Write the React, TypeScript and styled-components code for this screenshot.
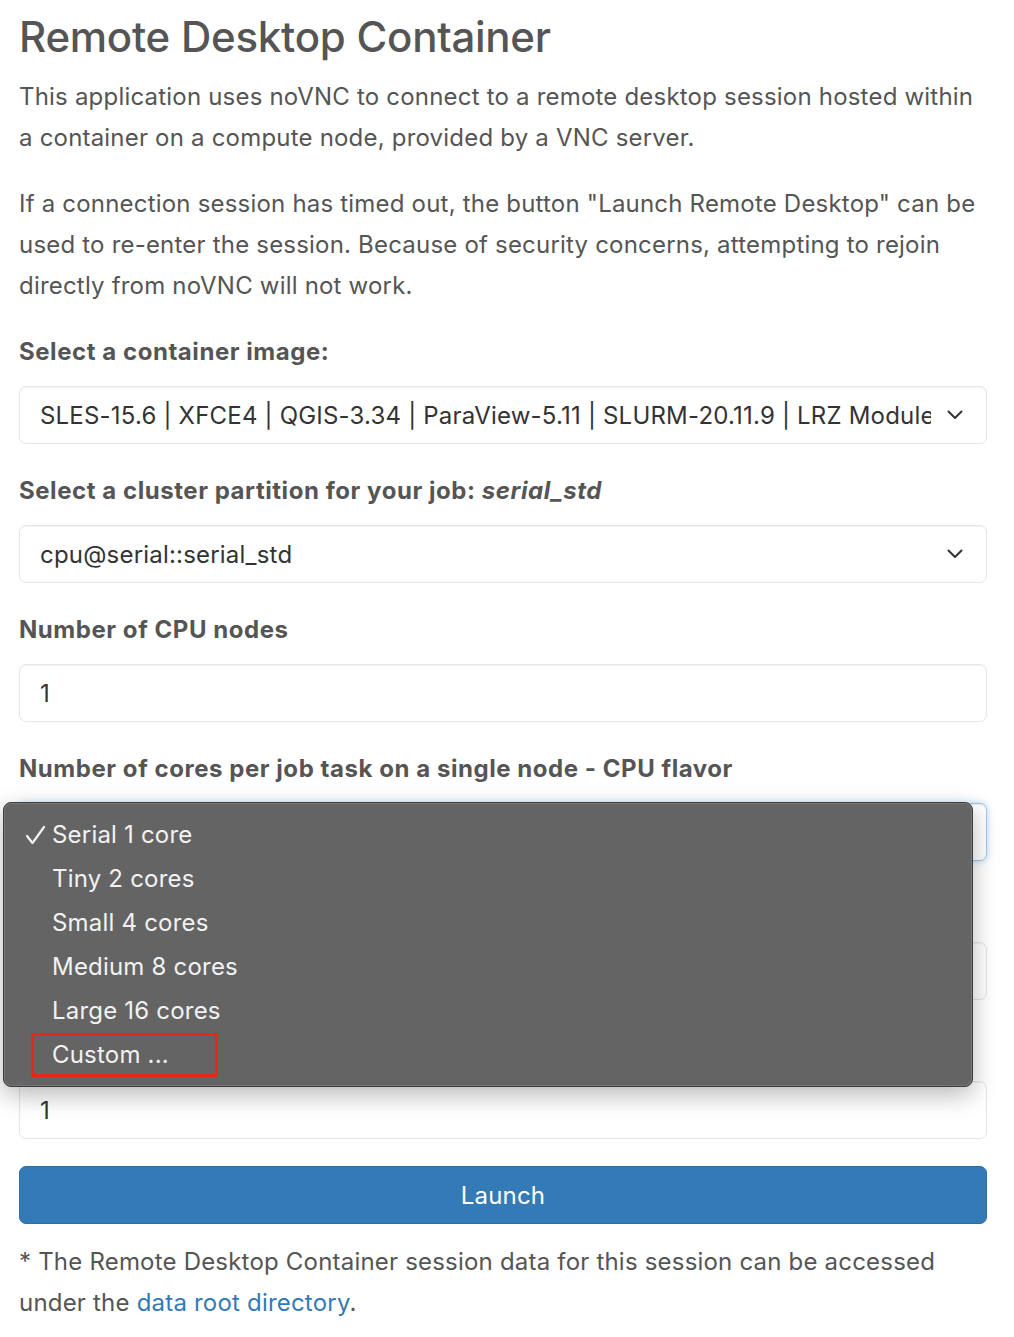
import React from "react";
import styled, { createGlobalStyle } from "styled-components";

const GlobalStyle = createGlobalStyle`
  body {
    margin: 0;
    background: #ffffff;
    font-family: Inter, "Liberation Sans", sans-serif;
    color: #555555;
  }
`;

const Page = styled.div`
  width: 968px;
  padding: 0 27px 40px 19px;
`;

const Title = styled.h1`
  margin: 13px 0 15px;
  font-size: 42px;
  font-weight: 500;
  line-height: 48px;
  color: #555555;
  letter-spacing: -0.25px;
`;

const Paragraph = styled.p`
  margin: 0 0 25px;
  font-size: 24px;
  line-height: 41px;
  letter-spacing: 0.2px;
`;

const FieldGroup = styled.div`
  position: relative;
  margin-bottom: 26px;
`;

const Label = styled.div`
  font-size: 24px;
  font-weight: 700;
  line-height: 41px;
  letter-spacing: 0.55px;
  margin-bottom: 14px;
  color: #555555;
`;

const Control = styled.div<{ $focused?: boolean }>`
  box-sizing: border-box;
  height: 58px;
  display: flex;
  align-items: center;
  justify-content: space-between;
  padding: 0 23px 0 20px;
  border: 1px solid ${(p) => (p.$focused ? "#9ec9ee" : "#e6e6e6")};
  border-radius: 7px;
  background: #ffffff;
  box-shadow: ${(p) =>
    p.$focused
      ? "inset 0 1px 1px rgba(0,0,0,.075), 0 0 6px rgba(102,175,233,.55)"
      : "inset 0 1px 1px rgba(0,0,0,.05)"};
  font-size: 24px;
  letter-spacing: 0.2px;
  color: #333333;
`;

const ControlText = styled.span`
  white-space: nowrap;
  overflow: hidden;
  flex: 1;
  margin-right: 16px;
`;

const Chevron = () => (
  <svg width="16" height="10" viewBox="0 0 16 10" fill="none">
    <path d="M1.5 1.5l6.5 6.5 6.5-6.5" stroke="#333" strokeWidth="2" strokeLinecap="round" strokeLinejoin="round" />
  </svg>
);

// native select popup, drawn over the fields below it
const Menu = styled.div`
  position: absolute;
  left: -16px;
  top: 54px;
  width: 970px;
  box-sizing: border-box;
  padding: 9px 0 10px;
  background: #646464;
  border: 1px solid #3e3e3e;
  border-radius: 8px;
  box-shadow: inset 0 0 0 1px rgba(255, 255, 255, 0.12), 0 8px 24px rgba(0, 0, 0, 0.28);
  z-index: 5;
`;

const MenuItem = styled.div`
  position: relative;
  height: 44px;
  display: flex;
  align-items: center;
  padding-left: 48px;
  font-size: 24px;
  letter-spacing: 0.2px;
  color: #f2f2f2;
`;

const CheckBox = styled.svg`
  position: absolute;
  left: 21px;
  top: 13px;
`;

const Check = () => (
  <CheckBox width="21" height="20" viewBox="0 0 21 20" fill="none">
    <path d="M2 11l5.5 7L19 2" stroke="#f2f2f2" strokeWidth="2.2" strokeLinecap="round" strokeLinejoin="round" />
  </CheckBox>
);

const Highlight = styled.span`
  position: absolute;
  left: 27px;
  top: 1px;
  width: 187px;
  height: 44px;
  box-sizing: border-box;
  border: 3px solid #e8261c;
`;

const LaunchButton = styled.button`
  display: block;
  width: 100%;
  height: 58px;
  margin: 27px 0 17px;
  border: 1px solid #2e6da4;
  border-radius: 7px;
  background: #337ab7;
  color: #ffffff;
  font-family: inherit;
  font-size: 24px;
  letter-spacing: 0.2px;
`;

const Note = styled.p`
  margin: 0;
  font-size: 24px;
  line-height: 41px;
  letter-spacing: 0.2px;
`;

const Link = styled.a`
  color: #337ab7;
  text-decoration: none;
`;

const coreOptions = [
  "Serial 1 core",
  "Tiny 2 cores",
  "Small 4 cores",
  "Medium 8 cores",
  "Large 16 cores",
  "Custom ...",
];

export default function App() {
  return (
    <Page>
      <GlobalStyle />
      <Title>Remote Desktop Container</Title>
      <Paragraph>
        This application uses noVNC to connect to a remote desktop session hosted within a
        container on a compute node, provided by a VNC server.
      </Paragraph>
      <Paragraph>
        If a connection session has timed out, the button "Launch Remote Desktop" can be used
        to re-enter the session. Because of security concerns, attempting to rejoin directly
        from noVNC will not work.
      </Paragraph>

      <FieldGroup>
        <Label>Select a container image:</Label>
        <Control>
          <ControlText>
            SLES-15.6 | XFCE4 | QGIS-3.34 | ParaView-5.11 | SLURM-20.11.9 | LRZ Modules
          </ControlText>
          <Chevron />
        </Control>
      </FieldGroup>

      <FieldGroup>
        <Label>
          Select a cluster partition for your job: <i>serial_std</i>
        </Label>
        <Control>
          <ControlText>cpu@serial::serial_std</ControlText>
          <Chevron />
        </Control>
      </FieldGroup>

      <FieldGroup>
        <Label>Number of CPU nodes</Label>
        <Control>
          <ControlText>1</ControlText>
        </Control>
      </FieldGroup>

      <FieldGroup>
        <Label>Number of cores per job task on a single node - CPU flavor</Label>
        <Control $focused>
          <ControlText>Serial 1 core</ControlText>
          <Chevron />
        </Control>
        <Menu>
          {coreOptions.map((opt, i) => (
            <MenuItem key={opt}>
              {i === 0 && <Check />}
              {opt}
              {opt === "Custom ..." && <Highlight />}
            </MenuItem>
          ))}
        </Menu>
      </FieldGroup>

      <FieldGroup>
        <Label>Number of CPU cores per task</Label>
        <Control>
          <ControlText>1</ControlText>
        </Control>
      </FieldGroup>

      <FieldGroup>
        <Label>Number of tasks per node</Label>
        <Control>
          <ControlText>1</ControlText>
        </Control>
      </FieldGroup>

      <LaunchButton>Launch</LaunchButton>
      <Note>
        * The Remote Desktop Container session data for this session can be accessed under the{" "}
        <Link href="#">data root directory</Link>.
      </Note>
    </Page>
  );
}
